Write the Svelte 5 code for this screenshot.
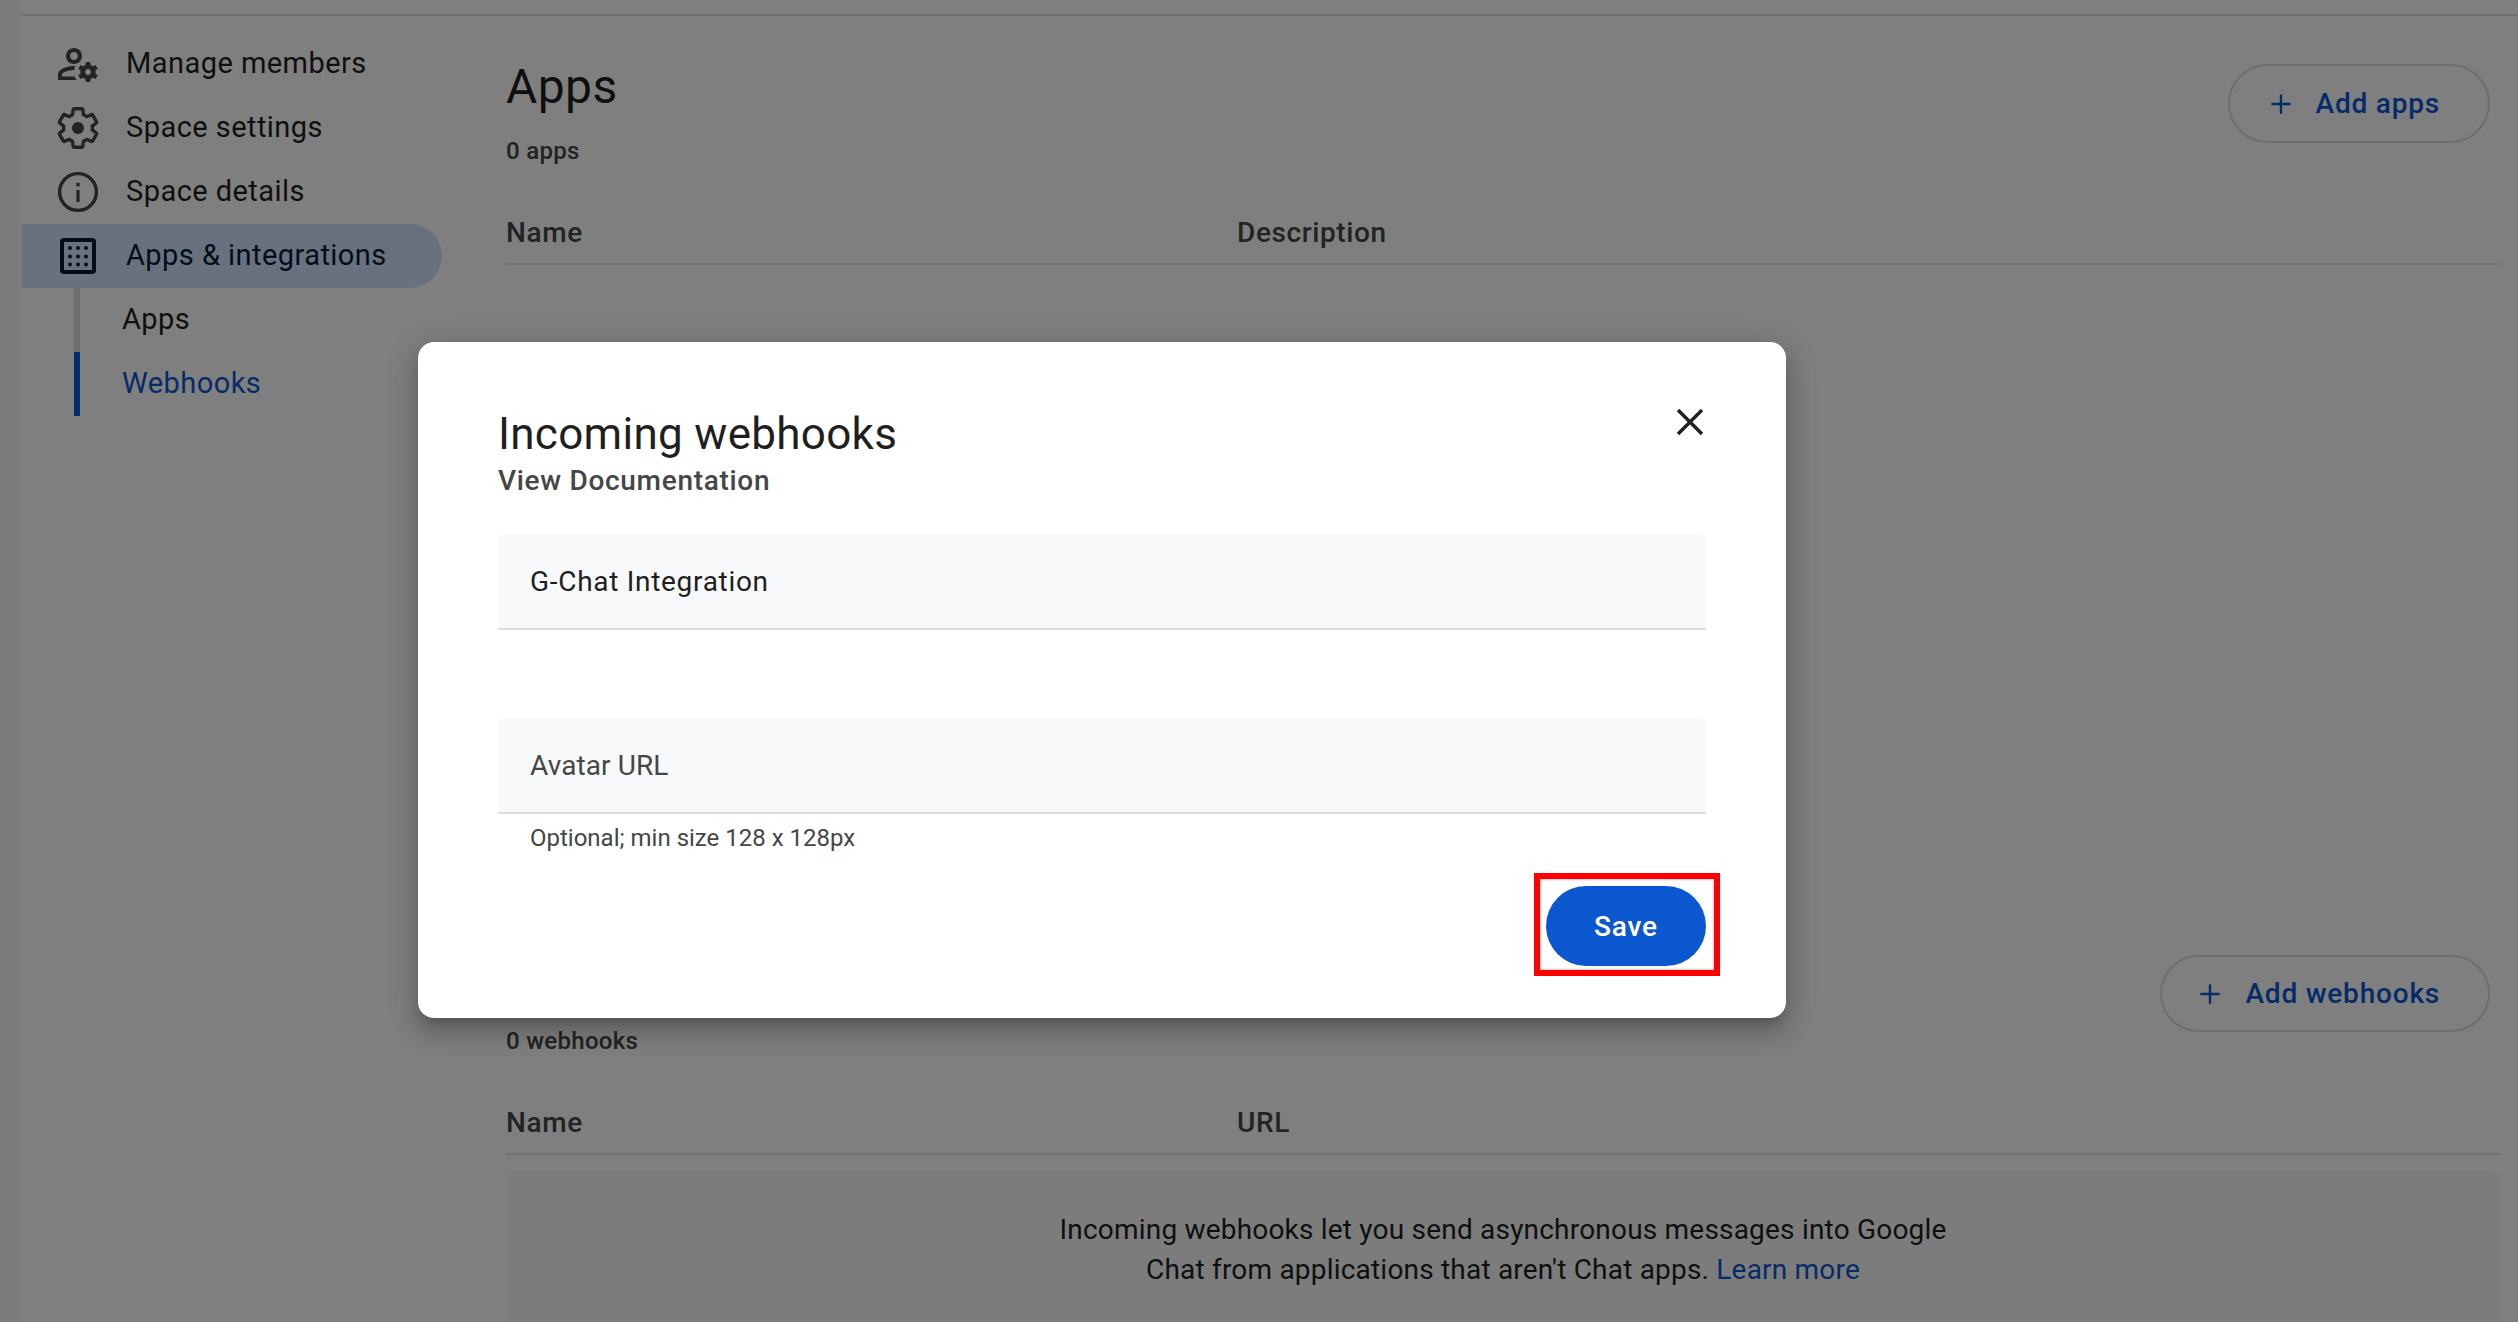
<script>
	const navItems = [
		{ label: 'Manage members', icon: 'members' },
		{ label: 'Space settings', icon: 'settings' },
		{ label: 'Space details', icon: 'info' },
		{ label: 'Apps & integrations', icon: 'apps', active: true }
	];
	const subItems = [
		{ label: 'Apps', active: false },
		{ label: 'Webhooks', active: true }
	];
</script>

<div class="page">
	<div class="strip"></div>
	<div class="body">
		<nav class="sidebar">
			{#each navItems as item}
				<div class="nav-item" class:active={item.active}>
					<svg class="nav-icon" viewBox="0 0 24 24" aria-hidden="true">
						{#if item.icon === 'members'}
							<path d="M4 18.2v-.85c0-.34.16-.66.41-.81C6.1 15.53 8.03 15 10 15l.08.01c.1-.7.3-1.37.59-1.98-.22-.02-.44-.03-.67-.03-2.42 0-4.68.67-6.61 1.82-.88.52-1.39 1.5-1.39 2.53V20h9.26c-.42-.6-.75-1.18-.97-1.8H4zM10 12c2.21 0 4-1.79 4-4s-1.79-4-4-4-4 1.79-4 4 1.79 4 4 4zm0-6c1.1 0 2 .9 2 2s-.9 2-2 2-2-.9-2-2 .9-2 2-2zM20.75 16c0-.22-.03-.42-.06-.63l1.14-1.01-1-1.73-1.45.49c-.32-.27-.68-.48-1.08-.63L18 11h-2l-.3 1.49c-.4.15-.76.36-1.08.63l-1.45-.49-1 1.73 1.14 1.01c-.03.21-.06.41-.06.63s.03.42.06.63l-1.14 1.01 1 1.73 1.45-.49c.32.27.68.48 1.08.63L16 21h2l.3-1.49c.4-.15.76-.36 1.08-.63l1.45.49 1-1.73-1.14-1.01c.03-.21.06-.41.06-.63zM17 17.5c-.83 0-1.5-.67-1.5-1.5s.67-1.5 1.5-1.5 1.5.67 1.5 1.5-.67 1.5-1.5 1.5z" />
						{:else if item.icon === 'settings'}
							<path class="line" d="M19.14 12.94c.04-.3.06-.61.06-.94 0-.32-.02-.64-.07-.94l2.03-1.58c.18-.14.23-.41.12-.61l-1.92-3.32c-.12-.22-.37-.29-.59-.22l-2.39.96c-.5-.38-1.03-.7-1.62-.94l-.36-2.54c-.04-.24-.24-.41-.48-.41h-3.84c-.24 0-.43.17-.47.41l-.36 2.54c-.59.24-1.13.57-1.62.94l-2.39-.96c-.22-.08-.47 0-.59.22L2.74 8.87c-.12.21-.08.47.12.61l2.03 1.58c-.05.3-.09.63-.09.94s.02.64.07.94l-2.03 1.58c-.18.14-.23.41-.12.61l1.92 3.32c.12.22.37.29.59.22l2.39-.96c.5.38 1.03.7 1.62.94l.36 2.54c.05.24.24.41.48.41h3.84c.24 0 .44-.17.47-.41l.36-2.54c.59-.24 1.13-.56 1.62-.94l2.39.96c.22.08.47 0 .59-.22l1.92-3.32c.12-.22.07-.47-.12-.61l-2.01-1.58z" />
							<circle cx="12" cy="12" r="3" />
						{:else if item.icon === 'info'}
							<circle class="line" cx="12" cy="12" r="9.2" />
							<rect x="11.2" y="11" width="1.6" height="6" />
							<rect x="11.2" y="7.4" width="1.6" height="1.8" />
						{:else}
							<rect class="line heavy" x="4" y="4" width="16" height="16" rx="1" />
							{#each [8, 12.2, 16.3] as y}
								{#each [8, 12, 16] as x}
									<circle cx={x} cy={y} r="1" />
								{/each}
							{/each}
						{/if}
					</svg>
					<span>{item.label}</span>
				</div>
			{/each}
			<div class="sub-list">
				{#each subItems as sub}
					<div class="sub-item" class:active={sub.active}>{sub.label}</div>
				{/each}
			</div>
		</nav>

		<main class="main">
			<section class="section apps">
				<div class="section-head">
					<div>
						<h1>Apps</h1>
						<div class="count">0 apps</div>
					</div>
					<button class="add">
						<svg viewBox="0 0 24 24" aria-hidden="true"><path d="M12 1.5v21M1.5 12h21" /></svg>
						Add apps
					</button>
				</div>
				<div class="table-head">
					<span>Name</span><span>Description</span>
				</div>
			</section>

			<section class="section">
				<div class="section-head">
					<div>
						<h1>Webhooks</h1>
						<div class="count">0 webhooks</div>
					</div>
					<button class="add slim">
						<svg viewBox="0 0 24 24" aria-hidden="true"><path d="M12 1.5v21M1.5 12h21" /></svg>
						Add webhooks
					</button>
				</div>
				<div class="table-head">
					<span>Name</span><span>URL</span>
				</div>
				<div class="empty">
					Incoming webhooks let you send asynchronous messages into Google<br />
					Chat from applications that aren't Chat apps. <a href="#learn">Learn more</a>
				</div>
			</section>
		</main>
	</div>

	<div class="scrim"></div>

	<div class="dialog" role="dialog">
		<div class="dialog-head">
			<div>
				<h2>Incoming webhooks</h2>
				<div class="doc">View Documentation</div>
			</div>
			<svg class="close" viewBox="0 0 28 28" aria-hidden="true"><path d="M2 2l24 24M26 2L2 26" /></svg>
		</div>
		<div class="field first">G-Chat Integration</div>
		<div class="field second">Avatar URL</div>
		<div class="help">Optional; min size 128 x 128px</div>
		<div class="actions">
			<div class="save-wrap">
				<button class="save">Save</button>
				<div class="marker"></div>
			</div>
		</div>
	</div>
</div>

<style>
	:global(body) {
		margin: 0;
	}

	.page {
		position: relative;
		display: flex;
		height: 1322px;
		overflow: hidden;
		background: #fff;
		font-family: Roboto, 'Liberation Sans', sans-serif;
		font-size: 28px;
		color: #1f1f1f;
	}

	.strip {
		width: 22px;
		flex: none;
		background: #f8f8f8;
	}

	.body {
		flex: 1;
		display: flex;
		min-width: 0;
		margin-top: 14px;
		border-top: 2px solid #e3e3e3;
	}

	.sidebar {
		width: 484px;
		flex: none;
		padding-top: 16px;
		font-size: 29px;
		letter-spacing: 0.45px;
	}

	.nav-item {
		display: flex;
		align-items: center;
		gap: 24px;
		width: 420px;
		height: 64px;
		padding-left: 32px;
		box-sizing: border-box;
		border-radius: 0 32px 32px 0;
	}

	.nav-item span {
		margin-top: -2px;
	}

	.nav-item.active {
		background: #d3e3fd;
		color: #001d35;
	}

	.nav-icon {
		width: 48px;
		height: 48px;
		flex: none;
		fill: #444746;
	}

	.nav-item.active .nav-icon {
		fill: #001d35;
	}

	.nav-icon .line {
		fill: none;
		stroke: #444746;
		stroke-width: 1.7;
	}

	.nav-icon .heavy {
		stroke: #001d35;
		stroke-width: 2;
	}

	.sub-list {
		margin-left: 52px;
	}

	.sub-item {
		height: 64px;
		line-height: 63px;
		padding-left: 42px;
		border-left: 6px solid #dadce0;
	}

	.sub-item.active {
		border-left-color: #0b57d0;
		color: #0b57d0;
	}

	.main {
		flex: 1;
		min-width: 0;
		padding-right: 18px;
	}

	.section.apps {
		height: 890px;
	}

	.section-head {
		display: flex;
		justify-content: space-between;
		align-items: flex-start;
	}

	h1 {
		margin: 43px 0 0;
		font-size: 48px;
		font-weight: 400;
		line-height: 56px;
		letter-spacing: 0.4px;
	}

	.count {
		margin-top: 20px;
		font-size: 24px;
		font-weight: 500;
		line-height: 32px;
		letter-spacing: 0.3px;
		color: #444746;
	}

	.add {
		display: flex;
		align-items: center;
		gap: 24px;
		height: 79px;
		margin: 48px 10px 0 0;
		padding: 0 48px 0 40px;
		border: 2px solid #dadce0;
		border-radius: 40px;
		background: none;
		font: 500 28px Roboto, 'Liberation Sans', sans-serif;
		letter-spacing: 0.8px;
		color: #0b57d0;
	}

	.add.slim {
		height: 77px;
		margin-top: 49px;
		padding-left: 37px;
	}

	.add svg {
		width: 22px;
		height: 22px;
		fill: none;
		stroke: #0b57d0;
		stroke-width: 2.6;
	}

	.table-head {
		display: flex;
		margin-top: 46px;
		padding-bottom: 10px;
		border-bottom: 2px solid #e3e3e3;
		font-weight: 500;
		line-height: 40px;
		letter-spacing: 0.6px;
		color: #444746;
	}

	.table-head span:first-child {
		width: 731px;
	}

	.empty {
		height: 300px;
		margin-top: 16px;
		padding-top: 39px;
		border-radius: 8px 8px 0 0;
		background: #f8f9fa;
		text-align: center;
		line-height: 40px;
		letter-spacing: 0.2px;
	}

	.empty a {
		color: #0b57d0;
		text-decoration: none;
	}

	.scrim {
		position: absolute;
		inset: 0;
		background: rgba(0, 0, 0, 0.5);
	}

	.dialog {
		position: absolute;
		left: 418px;
		top: 342px;
		width: 1368px;
		box-sizing: border-box;
		padding: 64px 80px 52px;
		border-radius: 16px;
		background: #fff;
		box-shadow:
			0 8px 10px -5px rgba(0, 0, 0, 0.2),
			0 16px 24px 2px rgba(0, 0, 0, 0.14),
			0 6px 30px 5px rgba(0, 0, 0, 0.12);
	}

	.dialog-head {
		display: flex;
		justify-content: space-between;
		align-items: flex-start;
	}

	h2 {
		margin: 0;
		font-size: 44px;
		font-weight: 400;
		line-height: 56px;
		letter-spacing: 0.3px;
	}

	.doc {
		margin-top: 1px;
		font-weight: 500;
		line-height: 36px;
		letter-spacing: 0.7px;
		color: #444746;
	}

	.close {
		width: 28px;
		height: 28px;
		margin: 2px 2px 0 0;
		fill: none;
		stroke: #1f1f1f;
		stroke-width: 3.4;
	}

	.field {
		height: 96px;
		box-sizing: border-box;
		padding-left: 32px;
		line-height: 96px;
		border-bottom: 2px solid #dadce0;
		border-radius: 8px 8px 0 0;
		background: #f8f9fa;
	}

	.field.first {
		margin-top: 35px;
		letter-spacing: 0.7px;
	}

	.field.second {
		margin-top: 88px;
		letter-spacing: 0.1px;
		color: #444746;
	}

	.help {
		margin-top: 8px;
		padding-left: 32px;
		font-size: 24px;
		line-height: 32px;
		color: #444746;
	}

	.actions {
		display: flex;
		justify-content: flex-end;
		margin-top: 32px;
	}

	.save-wrap {
		position: relative;
	}

	.save {
		display: block;
		width: 160px;
		height: 80px;
		border: 0;
		border-radius: 40px;
		background: #0b57d0;
		font: 500 28px Roboto, 'Liberation Sans', sans-serif;
		letter-spacing: 0.8px;
		color: #fff;
	}

	.marker {
		position: absolute;
		inset: -13px -14px -10px -12px;
		border: 6px solid #fe0000;
		box-shadow: inset 0 0 3px rgba(0, 0, 0, 0.45);
	}
</style>
